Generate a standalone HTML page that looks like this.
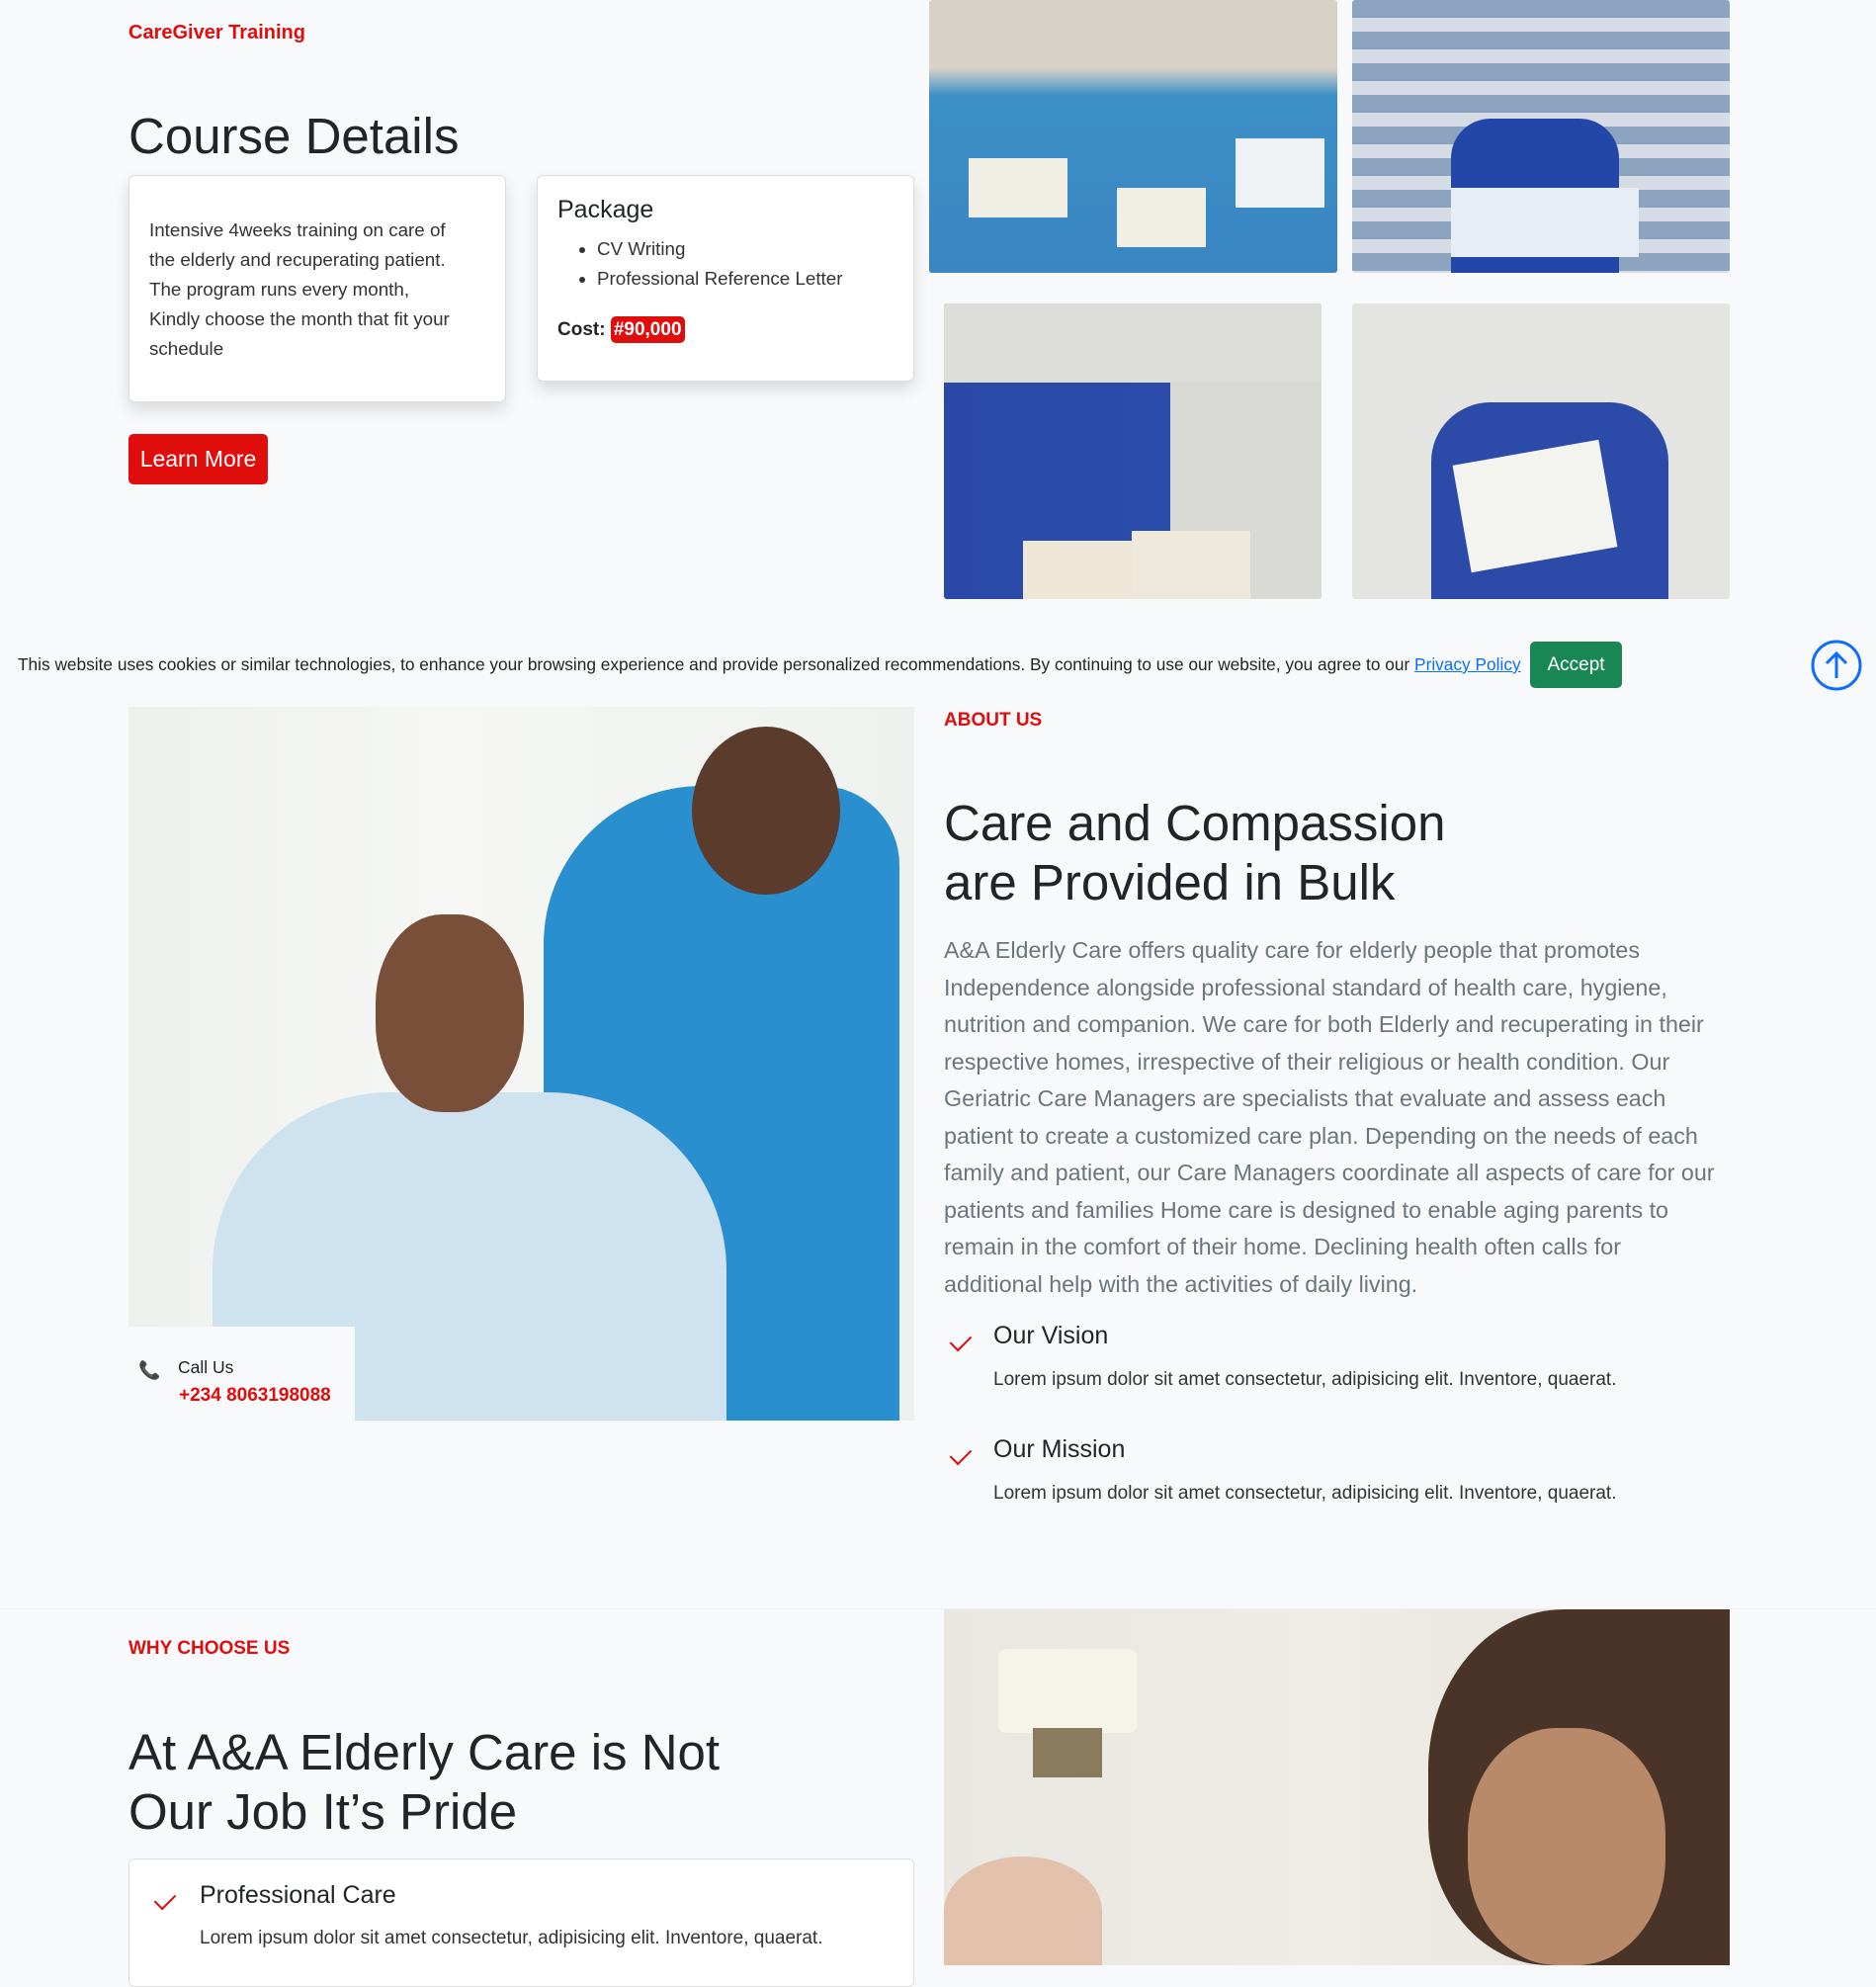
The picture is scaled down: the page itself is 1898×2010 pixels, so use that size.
<!DOCTYPE html>
<html><head><meta charset="utf-8"><style>
*{margin:0;padding:0;box-sizing:border-box}
body{width:1898px;height:1988px;overflow:hidden;background:#f8f9fa;font-family:"Liberation Sans",sans-serif;color:#212529;position:relative}
.a{position:absolute}
.red{color:#e00d0d}
.card{background:#fff;border:1px solid #ddd;border-radius:6px;box-shadow:0 8px 16px rgba(0,0,0,.12)}
h1{font-weight:500;font-size:51px;line-height:60px;color:#212529}
.photo{overflow:hidden;border-radius:3px}
.p{font-size:23.3px;line-height:37.5px;color:#6c757d;font-weight:300;white-space:nowrap}
.chk{width:20px;height:12px;border-left:2.5px solid #e00d0d;border-bottom:2.5px solid #e00d0d;transform:rotate(-45deg)}
.lor{font-size:19px;color:#333;white-space:nowrap}
</style></head><body>
<div class="a red" style="left:130px;top:22px;font-size:20px;font-weight:bold">CareGiver Training</div>
<h1 class="a" style="left:130px;top:108px">Course Details</h1>
<div class="a card" style="left:130px;top:177px;width:382px;height:230px;padding:40px 12px 0 20px;font-size:18.8px;line-height:30px;color:#333;white-space:nowrap">Intensive 4weeks training on care of<br>the elderly and recuperating patient.<br>The program runs every month,<br>Kindly choose the month that fit your<br>schedule</div>
<div class="a card" style="left:543px;top:177px;width:382px;height:209px;padding:20px 20px">
<div style="font-size:25px;margin-bottom:10px">Package</div>
<ul style="margin-left:40px;font-size:18.8px;line-height:30px;color:#333"><li>CV Writing</li><li>Professional Reference Letter</li></ul>
<div style="margin-top:26px;font-size:19px;font-weight:bold">Cost: <span style="background:#e00d0d;color:#fff;padding:3px 3px;border-radius:5px">#90,000</span></div>
</div>
<div class="a" style="left:130px;top:439px;width:141px;height:51px;background:#e00d0d;border-radius:5px;color:#fff;font-size:23px;line-height:51px;text-align:center">Learn More</div>

<div class="a photo" style="left:940px;top:0;width:413px;height:276px;background:linear-gradient(180deg,#d8d2c8 0,#d8d2c8 25%,#3c8fc7 35%,#3a86c2 100%)"><div class="a" style="left:40px;top:160px;width:100px;height:60px;background:#f1eee6"></div><div class="a" style="left:190px;top:190px;width:90px;height:60px;background:#f1eee6"></div><div class="a" style="left:310px;top:140px;width:90px;height:70px;background:#eef2f5"></div></div>
<div class="a photo" style="left:1368px;top:0;width:382px;height:276px;background:repeating-linear-gradient(180deg,#8da4c0 0,#8da4c0 18px,#d5dce6 18px,#d5dce6 32px)"><div class="a" style="left:100px;top:120px;width:170px;height:156px;background:#2347a8;border-radius:40px 40px 0 0"></div><div class="a" style="left:100px;top:190px;width:190px;height:70px;background:#e6edf4"></div></div>
<div class="a photo" style="left:955px;top:307px;width:382px;height:299px;background:linear-gradient(90deg,#2a49a6 0,#2b4cab 60%,#d9d9d6 60%)"><div class="a" style="left:0;top:0;width:382px;height:80px;background:#dcdcd8"></div><div class="a" style="left:80px;top:240px;width:120px;height:59px;background:#eee6d7"></div><div class="a" style="left:190px;top:230px;width:120px;height:69px;background:#efe9dc"></div></div>
<div class="a photo" style="left:1368px;top:307px;width:382px;height:299px;background:#e4e4e2"><div class="a" style="left:80px;top:100px;width:240px;height:199px;background:#2c4aa8;border-radius:60px 60px 0 0"></div><div class="a" style="left:110px;top:150px;width:150px;height:110px;background:#f3f3f0;transform:rotate(-10deg)"></div></div>

<div class="a" style="left:18px;top:662px;font-size:17.3px;color:#212529;white-space:nowrap">This website uses cookies or similar technologies, to enhance your browsing experience and provide personalized recommendations. By continuing to use our website, you agree to our <span style="color:#0d6efd;text-decoration:underline">Privacy Policy</span></div>
<div class="a" style="left:1548px;top:649px;width:93px;height:47px;background:#198754;border-radius:5px;color:#fff;font-size:19px;line-height:47px;text-align:center">Accept</div>
<svg class="a" style="left:1832px;top:647px" width="52" height="52" viewBox="0 0 52 52"><circle cx="26" cy="26" r="24" fill="none" stroke="#0d6efd" stroke-width="3"/><path d="M26 39V14M16 24l10-10 10 10" fill="none" stroke="#0d6efd" stroke-width="3"/></svg>

<div class="a" style="left:130px;top:715px;width:795px;height:722px;overflow:hidden;background:linear-gradient(90deg,#eef0ee 0,#f6f7f5 40%,#eef2ee 100%)">
<div class="a" style="left:420px;top:80px;width:360px;height:642px;background:#2a8fcf;border-radius:160px 80px 0 0"></div>
<div class="a" style="left:570px;top:20px;width:150px;height:170px;background:#5a3b2c;border-radius:50%"></div>
<div class="a" style="left:85px;top:390px;width:520px;height:332px;background:#cfe2f0;border-radius:180px 180px 0 0"></div>
<div class="a" style="left:250px;top:210px;width:150px;height:200px;background:#7a4f3a;border-radius:45%"></div>
</div>
<div class="a" style="left:130px;top:1342px;width:229px;height:95px;background:#f8f9fa"></div>
<div class="a" style="left:140px;top:1376px;font-size:18px">📞</div>
<div class="a" style="left:180px;top:1373px;font-size:17.5px;color:#212529">Call Us</div>
<div class="a red" style="left:181px;top:1401px;font-size:19px;font-weight:bold">+234 8063198088</div>

<div class="a red" style="left:955px;top:718px;font-size:19px;font-weight:bold">ABOUT US</div>
<h1 class="a" style="left:955px;top:803px">Care and Compassion<br>are Provided in Bulk</h1>
<div class="a p" style="left:955px;top:943px">A&amp;A Elderly Care offers quality care for elderly people that promotes<br>Independence alongside professional standard of health care, hygiene,<br>nutrition and companion. We care for both Elderly and recuperating in their<br>respective homes, irrespective of their religious or health condition. Our<br>Geriatric Care Managers are specialists that evaluate and assess each<br>patient to create a customized care plan. Depending on the needs of each<br>family and patient, our Care Managers coordinate all aspects of care for our<br>patients and families Home care is designed to enable aging parents to<br>remain in the comfort of their home. Declining health often calls for<br>additional help with the activities of daily living.</div>
<div class="a chk" style="left:962px;top:1350px"></div>
<div class="a" style="left:1005px;top:1337px;font-size:25px">Our Vision</div>
<div class="a lor" style="left:1005px;top:1385px">Lorem ipsum dolor sit amet consectetur, adipisicing elit. Inventore, quaerat.</div>
<div class="a chk" style="left:962px;top:1465px"></div>
<div class="a" style="left:1005px;top:1452px;font-size:25px">Our Mission</div>
<div class="a lor" style="left:1005px;top:1500px">Lorem ipsum dolor sit amet consectetur, adipisicing elit. Inventore, quaerat.</div>

<div class="a" style="left:0;top:1627px;width:1898px;height:1px;background:#eceeef"></div>
<div class="a red" style="left:130px;top:1657px;font-size:19px;font-weight:bold">WHY CHOOSE US</div>
<h1 class="a" style="left:130px;top:1743px">At A&amp;A Elderly Care is Not<br>Our Job It’s Pride</h1>
<div class="a" style="left:130px;top:1880px;width:795px;height:130px;background:#fff;border:1px solid #ddd;border-radius:6px"></div>
<div class="a chk" style="left:157px;top:1915px"></div>
<div class="a" style="left:202px;top:1903px;font-size:25px">Professional Care</div>
<div class="a lor" style="left:202px;top:1950px">Lorem ipsum dolor sit amet consectetur, adipisicing elit. Inventore, quaerat.</div>
<div class="a" style="left:955px;top:1628px;width:795px;height:360px;overflow:hidden;background:linear-gradient(90deg,#e9e7e2 0,#efece6 50%,#e5e1da 100%)">
<div class="a" style="left:55px;top:40px;width:140px;height:85px;background:#f6f3ea;border-radius:8px"></div>
<div class="a" style="left:90px;top:120px;width:70px;height:50px;background:#8a7a5e"></div>
<div class="a" style="left:490px;top:0;width:305px;height:360px;background:#4a3428;border-radius:45% 0 0 40%"></div>
<div class="a" style="left:530px;top:120px;width:200px;height:240px;background:#b98a6a;border-radius:45%"></div>
<div class="a" style="left:0;top:250px;width:160px;height:110px;background:#e2c2ad;border-radius:50% 50% 0 0"></div>
</div>
</body></html>
